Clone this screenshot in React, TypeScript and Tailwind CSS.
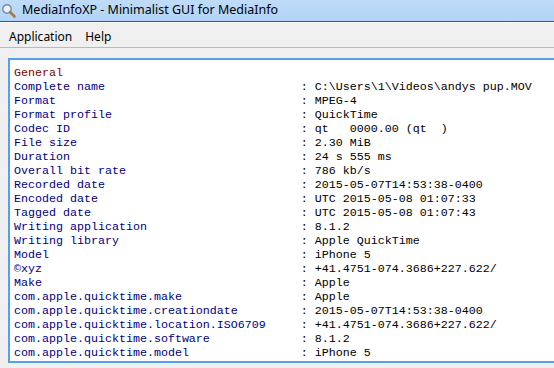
const rows: [string, string][] = [
  ["Complete name", "C:\\Users\\1\\Videos\\andys pup.MOV"],
  ["Format", "MPEG-4"],
  ["Format profile", "QuickTime"],
  ["Codec ID", "qt   0000.00 (qt  )"],
  ["File size", "2.30 MiB"],
  ["Duration", "24 s 555 ms"],
  ["Overall bit rate", "786 kb/s"],
  ["Recorded date", "2015-05-07T14:53:38-0400"],
  ["Encoded date", "UTC 2015-05-08 01:07:33"],
  ["Tagged date", "UTC 2015-05-08 01:07:43"],
  ["Writing application", "8.1.2"],
  ["Writing library", "Apple QuickTime"],
  ["Model", "iPhone 5"],
  ["\u00a9xyz", "+41.4751-074.3686+227.622/"],
  ["Make", "Apple"],
  ["com.apple.quicktime.make", "Apple"],
  ["com.apple.quicktime.creationdate", "2015-05-07T14:53:38-0400"],
  ["com.apple.quicktime.location.ISO6709", "+41.4751-074.3686+227.622/"],
  ["com.apple.quicktime.software", "8.1.2"],
  ["com.apple.quicktime.model", "iPhone 5"],
];

function SearchIcon() {
  return (
    <svg width="16" height="16" viewBox="0 0 16 16" className="shrink-0">
      <circle cx="6" cy="6" r="4.2" fill="#e6f0fa" stroke="#7b8a99" strokeWidth="1.4" />
      <path d="M9 9 L13.5 13.5" stroke="#b0773a" strokeWidth="2.6" strokeLinecap="round" />
    </svg>
  );
}

export default function App() {
  const ui = { fontFamily: '"Noto Sans", "Open Sans", sans-serif' };
  const mono = { fontFamily: '"Liberation Mono", "Courier New", monospace' };

  return (
    <div className="w-[554px] h-[368px] overflow-hidden bg-[#f0f0f0] flex flex-col" style={ui}>
      {/* title bar */}
      <div className="h-[22px] shrink-0 flex items-center gap-[5px] pl-[1px] bg-gradient-to-b from-[#bfdcf9] to-[#b2d4f7] border-b border-[#4d545c]">
        <SearchIcon />
        <span className="text-[12.5px] text-black leading-none pb-[1px]">MediaInfoXP - Minimalist GUI for MediaInfo</span>
      </div>
      <div className="h-px bg-white/70 shrink-0" />

      {/* menu bar */}
      <div className="h-[25px] shrink-0 flex items-center gap-[13px] pl-[9px] pt-[3px] border-b border-[#bababa] text-[12px] text-black">
        <span>Application</span>
        <span>Help</span>
      </div>

      {/* text view */}
      <div className="mt-[10px] ml-[8px] w-[560px] h-[305px] shrink-0 bg-white border-2 border-[#56a0ea] pl-[4px] pt-[6px]">
        <pre className="text-[11.67px] leading-[14px] m-0" style={mono}>
          <div className="text-[#800000]">General</div>
          {rows.map(([k, v]) => (
            <div key={k} className="flex">
              <span className="text-[#000080] whitespace-pre">{k.padEnd(41, " ")}</span>
              <span className="text-black whitespace-pre">{": " + v}</span>
            </div>
          ))}
        </pre>
      </div>
    </div>
  );
}
